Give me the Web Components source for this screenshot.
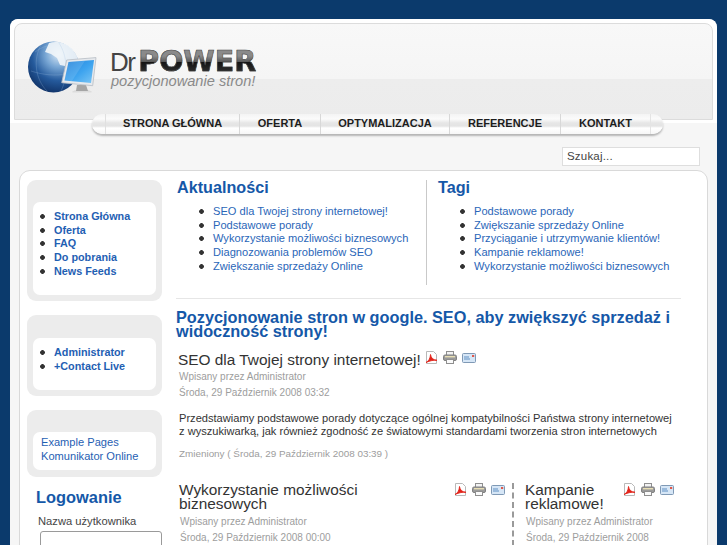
<!DOCTYPE html>
<html lang="pl">
<head>
<meta charset="utf-8">
<title>Dr Power</title>
<style>
  html, body { margin: 0; height: 545px; overflow: hidden; }
  body { background: #0b3a6c; font-family: "Liberation Sans", Arial, sans-serif; color: #333; }
</style>
</head>
<body>
<dp-page>
  <dp-masthead slot="top"></dp-masthead>
  <dp-nav slot="top"></dp-nav>
  <dp-search slot="top"></dp-search>

  <dp-module slot="side" bullets bold>
    <a>Strona Główna</a><a>Oferta</a><a>FAQ</a><a>Do pobrania</a><a>News Feeds</a>
  </dp-module>
  <dp-module slot="side" bullets bold short>
    <a>Administrator</a><a>+Contact Live</a>
  </dp-module>
  <dp-module slot="side" tight>
    <a>Example Pages</a><a>Komunikator Online</a>
  </dp-module>
  <dp-login slot="side"></dp-login>

  <dp-linkbox slot="main" heading="Aktualności">
    <a>SEO dla Twojej strony internetowej!</a>
    <a>Podstawowe porady</a>
    <a>Wykorzystanie możliwości biznesowych</a>
    <a>Diagnozowania problemów SEO</a>
    <a>Zwiększanie sprzedaży Online</a>
  </dp-linkbox>
  <dp-linkbox slot="main" heading="Tagi" divided>
    <a>Podstawowe porady</a>
    <a>Zwiększanie sprzedaży Online</a>
    <a>Przyciąganie i utrzymywanie klientów!</a>
    <a>Kampanie reklamowe!</a>
    <a>Wykorzystanie możliwości biznesowych</a>
  </dp-linkbox>

  <dp-article slot="lead" heading="SEO dla Twojej strony internetowej!" date="Środa, 29 Październik 2008 03:32" inline>
    <p>Przedstawiamy podstawowe porady dotyczące ogólnej kompatybilności Państwa strony internetowej<br>z wyszukiwarką, jak również zgodność ze światowymi standardami tworzenia stron internetowych</p>
    <small>Zmieniony ( Środa, 29 Październik 2008 03:39 )</small>
  </dp-article>

  <dp-article slot="left" heading="Wykorzystanie możliwości biznesowych" date="Środa, 29 Październik 2008 00:00"></dp-article>
  <dp-article slot="right" heading="Kampanie reklamowe!" date="Środa, 29 Październik 2008"></dp-article>
</dp-page>

<script>
class DpPage extends HTMLElement {
  constructor() {
    super();
    this.attachShadow({ mode: "open" });
    this.shadowRoot.innerHTML = `
      <style>
        :host { display: block; width: 707px; margin: 19px 0 0 10px; height: 526px; overflow: hidden;
                background: #f6f6f6; border-radius: 8px 8px 0 0; }
        .box { margin: 4px 9px 0 9px; height: 400px; background: #fff; border: 1px solid #d9d9d9;
               border-radius: 11px 11px 0 0; display: flex; gap: 14px; padding: 9px 0 0 7px; box-sizing: border-box; }
        .side { width: 135px; flex: none; display: flex; flex-direction: column; gap: 14px; }
        .content { width: 505px; flex: none; }
        .boxes { display: flex; height: 109px; padding-bottom: 9px; border-bottom: 1px solid #e6e6e6; }
        h2 { margin: 11px 0 0; font-size: 16.3px; line-height: 14px; font-weight: bold; color: #1558a8; }
        .cols { display: flex; margin-top: 22px; margin-left: 3px; }
        .cols > div:first-child { width: 333px; flex: none; }
        .cols > div:last-child { border-left: 2px dashed #9a9a9a; padding-left: 11px; flex: 1; }
        .lead { margin: 13px 0 0 2px; }
      </style>
      <slot name="top"></slot>
      <div class="box">
        <div class="side"><slot name="side"></slot></div>
        <div class="content">
          <div class="boxes"><slot name="main"></slot></div>
          <h2>Pozycjonowanie stron w google. SEO, aby zwiększyć sprzedaż i widoczność strony!</h2>
          <div class="lead"><slot name="lead"></slot></div>
          <div class="cols"><div><slot name="left"></slot></div><div><slot name="right"></slot></div></div>
        </div>
      </div>`;
  }
}

class DpMasthead extends HTMLElement {
  constructor() {
    super();
    this.attachShadow({ mode: "open" });
    this.shadowRoot.innerHTML = `
      <style>
        :host { display: block; background: #fff; padding: 4px 4px 3px 4px; border-radius: 8px 8px 0 0; }
        .in { height: 97px; box-sizing: border-box; border: 1px solid #dcdcdc; border-radius: 8px 8px 0 0;
              background: linear-gradient(#f8f8f8 0, #f5f5f5 55px, #ededed 55px, #ececec 100%);
              display: flex; align-items: flex-start; padding: 16px 0 0 12px; }
        svg { flex: none; display: block; }
        .brand { margin: 10px 0 0 10px; }
        .name { display: flex; align-items: baseline; height: 24px; line-height: 24px; }
        .dr { font-size: 26px; line-height: 24px; color: #444; letter-spacing: -1.6px; margin: 0 4px 0 -1px; }
        .power { font-family: "DejaVu Sans", sans-serif; font-size: 28.5px; line-height: 24px; font-weight: bold;
                 background: linear-gradient(#8a8a8a 25%, #5a5a5a 48%, #141414 52%, #333 100%);
                 -webkit-background-clip: text; background-clip: text; color: transparent;
                 -webkit-text-fill-color: transparent; -webkit-text-stroke: .5px #444; }
        .tag { font-size: 14.6px; font-style: italic; color: #8a8a8a; line-height: 14px; }
      </style>
      <div class="in">
        <svg width="74" height="56" viewBox="8 0 74 56">
          <defs>
            <radialGradient id="globe" cx=".6" cy=".25" r=".8">
              <stop offset="0" stop-color="#d8e8f6"/><stop offset=".32" stop-color="#78a6d4"/>
              <stop offset=".65" stop-color="#255a9c"/><stop offset="1" stop-color="#0e2f63"/>
            </radialGradient>
            <linearGradient id="scr" x1="0" y1="0" x2="1" y2="1">
              <stop offset="0" stop-color="#1f7fd8"/><stop offset=".55" stop-color="#3ea4ef"/><stop offset="1" stop-color="#7cc6f5"/>
            </linearGradient>
            <linearGradient id="base" x1="0" y1="0" x2="0" y2="1">
              <stop offset="0" stop-color="#cfcfcf"/><stop offset="1" stop-color="#f2f2f2"/>
            </linearGradient>
          </defs>
          <circle cx="34.5" cy="27" r="25.5" fill="url(#globe)"/>
          <path d="M30 3C36 1 46 2 52 8 55 11 58 15 59 20L53 25 49 31 46 26 41 25 38 18 32 14 26 12Z" fill="#f2f6fa" opacity=".9"/>
          <path d="M16 12C20 9 24 7 28 6M12 31C24 35 36 36 48 34M22 5C14 19 16 39 28 51M40 3C48 15 50 35 42 51" fill="none" stroke="#9fc0e0" stroke-width=".5" opacity=".5"/>
          <ellipse cx="63" cy="52" rx="10" ry="2" fill="url(#base)"/>
          <path d="M58 45h9l2 6h-12z" fill="#a5a5a5"/>
          <path d="M47.7 20L77 17.6 73.7 45.7 42.7 42.7Z" fill="#e6e9ed" stroke="#b6bcc4" stroke-width=".8"/>
          <path d="M49.5 22L75 20 72 43 45.5 40.5Z" fill="url(#scr)"/>
          <path d="M49.5 22L66 20.7 53 41 45.5 40.5Z" fill="#fff" opacity=".12"/>
        </svg>
        <div class="brand">
          <div class="name"><span class="dr">Dr</span><span class="power">POWER</span></div>
          <div class="tag">pozycjonowanie stron!</div>
        </div>
      </div>`;
  }
}

class DpNav extends HTMLElement {
  constructor() {
    super();
    this.attachShadow({ mode: "open" });
    const items = [["STRONA GŁÓWNA", 134], ["OFERTA", 81], ["OPTYMALIZACJA", 129], ["REFERENCJE", 111], ["KONTAKT", 90]];
    this.shadowRoot.innerHTML = `
      <style>
        :host { display: flex; position: relative; width: 571px; height: 20px; margin: -9px 0 0 82px;
                border-radius: 10px; overflow: hidden; box-shadow: 0 2px 2px #b5b5b5;
                background: linear-gradient(#f4f4f4 0, #fbfbfb 5px, #e6e6e6 9px, #e4e4e4 12px, #fff 14px, #f6f6f6 100%); }
        .cap { width: 13px; flex: none; border-right: 1px solid #e0e0e0; }
        a { display: block; box-sizing: border-box; text-align: center; border-right: 1px solid #d8d8d8;
            font-size: 11px; font-weight: bold; line-height: 18px; color: #1d1d1d; }
        a:last-of-type { border-right: 1px solid #e4e4e4; }
        .cap.end { border-right: 0; flex: 1; }
      </style>
      <span class="cap"></span>
      ${items.map(([t, w]) => `<a style="width:${w}px">${t}</a>`).join("")}
      <span class="cap end"></span>`;
  }
}

class DpSearch extends HTMLElement {
  constructor() {
    super();
    this.attachShadow({ mode: "open" });
    this.shadowRoot.innerHTML = `
      <style>
        :host { display: block; margin: 13px 0 0 552px; width: 138px; height: 19px; box-sizing: border-box;
                border: 1px solid #dedede; background: #fff; font-size: 11.5px; line-height: 17px;
                padding-left: 4px; color: #444; letter-spacing: .2px; }
      </style>Szukaj...`;
  }
}

class DpModule extends HTMLElement {
  constructor() {
    super();
    this.attachShadow({ mode: "open" });
    const bullets = this.hasAttribute("bullets");
    const bold = this.hasAttribute("bold");
    const tight = this.hasAttribute("tight");
    const short = this.hasAttribute("short");
    const pad = tight ? "4px 0 0 8px" : "8px 0 0 7px";
    const innerH = tight ? 38 : (short ? 52 : 93);
    this.shadowRoot.innerHTML = `
      <style>
        :host { display: block; background: #ececec; border-radius: 9px; padding: ${short ? 23 : 22}px 6px ${tight ? 7 : 6}px 6px; }
        .in { background: #fff; border-radius: 7px; height: ${innerH}px; box-sizing: border-box; padding: ${pad}; }
        ::slotted(a) { display: block; line-height: 13.7px; font-size: ${bold ? 10.8 : 11.1}px; font-weight: ${bold ? "bold" : "normal"}; color: #1f60b3;
          ${bullets ? "padding-left: 14px; background: radial-gradient(circle at 2.5px 2.5px, #333 2px, transparent 2.7px) no-repeat 0 center / 6px 6px;" : ""} }
        .bul { padding-top: 8px; }
      </style>
      <div class="in ${bullets ? "bul" : ""}"><slot></slot></div>`;
  }
}

class DpLogin extends HTMLElement {
  constructor() {
    super();
    this.attachShadow({ mode: "open" });
    this.shadowRoot.innerHTML = `
      <style>
        :host { display: block; margin-top: -5px; padding-left: 9px; }
        h3 { margin: 0; font-size: 16.4px; line-height: 22px; color: #1558a8; }
        label { display: block; margin: 6px 0 0 2px; font-size: 11.2px; line-height: 14px; color: #444; }
        .field { margin: 3px 0 0 4px; width: 122px; height: 24px; box-sizing: border-box; border: 1px solid #9a9a9a;
                 border-radius: 3px; background: #fff; }
      </style>
      <h3>Logowanie</h3>
      <label>Nazwa użytkownika</label>
      <div class="field"></div>`;
  }
}

class DpLinkbox extends HTMLElement {
  constructor() {
    super();
    this.attachShadow({ mode: "open" });
    const divided = this.hasAttribute("divided");
    this.shadowRoot.innerHTML = `
      <style>
        :host { display: block; box-sizing: border-box; height: 105px; ${divided ? "border-left: 1px solid #c9c9c9; padding-left: 11px; flex: 1;" : "width: 250px; flex: none; padding-left: 1px;"} }
        h3 { margin: -2px 0 0; font-size: 16.2px; line-height: 18px; color: #1558a8; }
        ul { margin: 9px 0 0; padding: 0 0 0 22px; list-style: none; }
        ::slotted(a) { display: block; font-size: 11.1px; line-height: 13.7px; color: #2a66b8; padding-left: 14px;
          background: radial-gradient(circle at 2.5px 2.5px, #333 2px, transparent 2.7px) no-repeat 0 center / 6px 6px; }
      </style>
      <h3>${this.getAttribute("heading")}</h3>
      <ul><slot></slot></ul>`;
  }
}

class DpIcons extends HTMLElement {
  constructor() {
    super();
    this.attachShadow({ mode: "open" });
    this.shadowRoot.innerHTML = `
      <style>
        :host { display: inline-flex; gap: 5px; flex: none; align-items: center; }
        svg { display: block; }
      </style>
      <svg width="13" height="13" viewBox="0 0 13 13">
        <path d="M1.5.5h7l3 3v9h-10z" fill="#fff" stroke="#b9b9b9"/>
        <path d="M1 11.5C3.5 10.5 5.5 7 5.5 3.5 6 7 8 9 12 9.3 9 9 5 9.5 1 11.5Z" fill="#e2231a" stroke="#e2231a" stroke-width=".9"/>
      </svg>
      <svg width="14" height="13" viewBox="0 0 14 13">
        <rect x="3.5" y=".5" width="7" height="4" fill="#f3f3f3" stroke="#8f8f8f"/>
        <rect x=".5" y="4" width="13" height="5.5" rx="1.5" fill="#9b9b9b" stroke="#808080"/>
        <rect x="2" y="5" width="10" height="1.4" fill="#e8dfb5"/>
        <rect x="3.5" y="8.5" width="7" height="4" fill="#fafafa" stroke="#8f8f8f"/>
      </svg>
      <svg width="14" height="10" viewBox="0 0 14 10">
        <rect x=".5" y=".5" width="13" height="9" rx="1" fill="#d6e6f6" stroke="#7f99b5"/>
        <rect x="10" y="2" width="2.2" height="2" fill="#e0584a"/>
        <path d="M2 4h5M2 6h6" stroke="#5f8fc2"/>
      </svg>`;
  }
}

class DpArticle extends HTMLElement {
  constructor() {
    super();
    this.attachShadow({ mode: "open" });
    const inline = this.hasAttribute("inline");
    this.shadowRoot.innerHTML = `
      <style>
        :host { display: block; }
        .head { display: flex; ${inline ? "gap: 4px; align-items: center;" : "justify-content: space-between; align-items: flex-start;"} }
        h4 { margin: 0; font-weight: normal; color: #333; font-size: 15.4px;
             ${inline ? "line-height: 18px;" : "line-height: 14px; max-width: 200px;"} }
        .icons { ${inline ? "margin-top: -5px;" : "margin-top: 0; margin-right: 7px;"} }
        .meta { margin: ${inline ? 0 : 3}px 0 0 1px; font-size: 10px; line-height: 16px; color: #9d9d9d; }
        ::slotted(p) { margin: 11px 0 0 1px; font-size: 11.1px; line-height: 13px; color: #333; white-space: nowrap; }
        ::slotted(small) { display: block; margin: 9px 0 0 1px; font-size: 9.9px; line-height: 14px; color: #9d9d9d; }
      </style>
      <div class="head"><h4>${this.getAttribute("heading")}</h4><dp-icons class="icons"></dp-icons></div>
      <div class="meta">Wpisany przez Administrator<br>${this.getAttribute("date")}</div>
      <slot></slot>`;
  }
}

customElements.define("dp-page", DpPage);
customElements.define("dp-masthead", DpMasthead);
customElements.define("dp-nav", DpNav);
customElements.define("dp-search", DpSearch);
customElements.define("dp-module", DpModule);
customElements.define("dp-login", DpLogin);
customElements.define("dp-linkbox", DpLinkbox);
customElements.define("dp-icons", DpIcons);
customElements.define("dp-article", DpArticle);
</script>
</body>
</html>
